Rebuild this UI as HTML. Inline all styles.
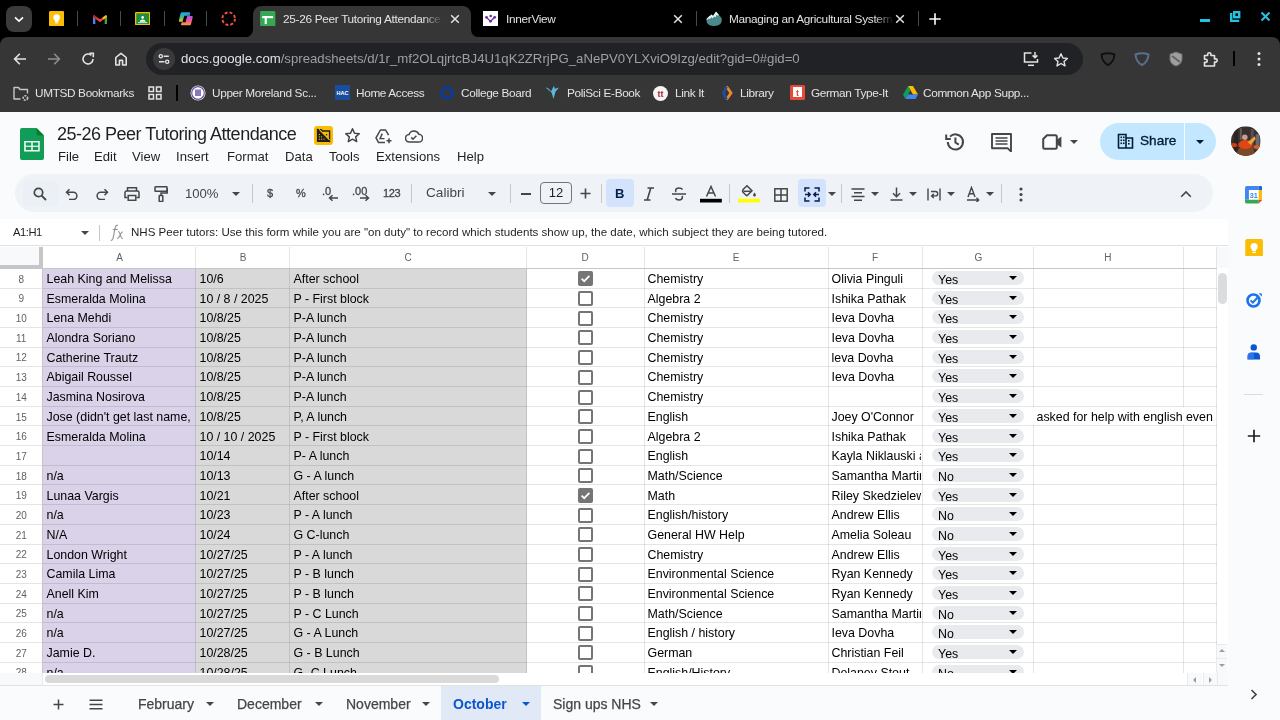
<!DOCTYPE html>
<html><head><meta charset="utf-8">
<style>
*{margin:0;padding:0;box-sizing:border-box}
html,body{width:1280px;height:720px;overflow:hidden;background:#f9fbfd;font-family:"Liberation Sans",sans-serif}
div{will-change:transform}
.a{position:absolute}
svg{display:block}
/* chrome */
#tabstrip{position:absolute;left:0;top:0;width:1280px;height:45px;background:#000}
#toolbar{position:absolute;left:0;top:37.2px;width:1280px;height:75.2px;background:#363636;border-radius:8px 8px 0 0}
.tabt{position:absolute;top:11.5px;font-size:11.8px;letter-spacing:-0.3px;color:#e3e3e3;white-space:nowrap;overflow:hidden}
.bm{position:absolute;top:85.8px;font-size:11.8px;letter-spacing:-0.35px;color:#e3e3e3;white-space:nowrap}
/* sheets header */
#title{position:absolute;left:57px;top:124px;font-size:18px;letter-spacing:-0.5px;color:#1f1f1f;white-space:nowrap}
.menu{position:absolute;top:149px;font-size:13.1px;color:#1f1f1f;white-space:nowrap}
#tb{position:absolute;left:15px;top:174.3px;width:1197.5px;height:37.5px;background:#eff3f8;border-radius:19px}
.tbi{position:absolute;color:#444746}
/* formula bar */
#fbar{position:absolute;left:0;top:219.4px;width:1227.5px;height:26.5px;background:#fff}
/* grid */
#grid{position:absolute;left:0;top:245px;width:1227.5px;height:428.3px;background:#fff;overflow:hidden}
#gridin{position:absolute;left:0;top:-245px;width:1280px;height:720px}
.bg{position:absolute}
.hl{position:absolute;left:0;width:1216.7px;height:1px;background:rgba(0,0,0,0.1)}
.vl{position:absolute;top:246.5px;width:1px;height:427px;background:rgba(0,0,0,0.1)}
.ch{position:absolute;top:246.5px;height:21.8px;line-height:21.8px;text-align:center;font-size:10px;color:#5f6368}
.rh{position:absolute;left:0;width:42.5px;height:19.69px;line-height:19.69px;text-align:center;font-size:10px;color:#5f6368}
.c{position:absolute;height:19.69px;line-height:20px;padding-left:3.5px;font-size:12.4px;color:#000;white-space:nowrap;overflow:hidden}
.cb{position:absolute;width:15px;height:15px;border:2px solid #757575;border-radius:2px}
.cb.on{background:#757575;border:none}
.chip{position:absolute;left:931.6px;width:92.3px;height:14.2px;border-radius:7.1px;background:#e8eaed;font-size:12.4px;line-height:18px;padding-left:6px;color:#000}
.chip i{position:absolute;right:7px;top:5px;width:0;height:0;border-left:4.5px solid transparent;border-right:4.5px solid transparent;border-top:4.5px solid #000}
.stab{position:absolute;top:696px;font-size:14px;color:#444746;white-space:nowrap;-webkit-text-stroke:0.25px #444746}
.dd{position:absolute;width:0;height:0;border-left:4.5px solid transparent;border-right:4.5px solid transparent;border-top:4.5px solid #444746}
</style></head><body>

<!-- ================= CHROME TAB STRIP ================= -->
<div id="tabstrip"></div>
<div id="toolbar"></div>

<!--CHROME-->
<!-- tab search -->
<div class="a" style="left:5.6px;top:5.6px;width:26.3px;height:26.3px;border-radius:8px;background:#3b3b3b"></div>
<svg class="a" style="left:13px;top:13px" width="12" height="12" viewBox="0 0 12 12"><path d="M2 4.3l4 3.8 4-3.8" fill="none" stroke="#fff" stroke-width="1.6"/></svg>
<!-- pinned -->
<svg class="a" style="left:48.7px;top:11px" width="15.3" height="15.3" viewBox="0 0 16 16"><rect width="16" height="16" rx="1.5" fill="#fbbc04"/><circle cx="8" cy="6.8" r="3.4" fill="#fff"/><rect x="6.2" y="9" width="3.6" height="2.5" fill="#fff"/><rect x="6.3" y="12" width="3.4" height="1" fill="#fff"/></svg>
<div class="a" style="left:77.2px;top:11.3px;width:1.3px;height:15px;background:#4a4a4a"></div>
<svg class="a" style="left:92.5px;top:13.5px" width="14" height="10.5" viewBox="0 0 14 10.5"><path d="M1.1 10.5V2.4L7 6.8l5.9-4.4v8.1" fill="none" stroke="#ea4335" stroke-width="2.2" stroke-linejoin="round"/><path d="M1.1 3v7.5" stroke="#4285f4" stroke-width="2.2"/><path d="M12.9 3v7.5" stroke="#34a853" stroke-width="2.2"/><path d="M10.6 4.1l2.3-1.7" stroke="#fbbc04" stroke-width="2.2" stroke-linecap="round"/><path d="M1.1 2.4l1.8 1.4" stroke="#c5221f" stroke-width="2.2" stroke-linecap="round"/></svg>
<div class="a" style="left:120.3px;top:11.3px;width:1.3px;height:15px;background:#4a4a4a"></div>
<svg class="a" style="left:134.7px;top:12px" width="15.3" height="13.3" viewBox="0 0 15.3 13.3"><rect width="15.3" height="13.3" rx="1.2" fill="#f8bd00"/><rect x="1.3" y="1.3" width="12.7" height="10.7" fill="#1e8e3e"/><circle cx="7.65" cy="5.4" r="1.3" fill="#fff"/><path d="M4.6 9.8c0.5-1.6 1.7-2.3 3.05-2.3s2.55 0.7 3.05 2.3z" fill="#fff"/><rect x="3" y="10.3" width="9.3" height="0.8" fill="#fff"/></svg>
<div class="a" style="left:163.5px;top:11.3px;width:1.3px;height:15px;background:#4a4a4a"></div>
<svg class="a" style="left:178px;top:11px" width="16" height="16" viewBox="0 0 16 16"><defs><linearGradient id="cpa" x1="0" y1="0" x2="0" y2="1"><stop offset="0" stop-color="#1c9ef6"/><stop offset="0.5" stop-color="#3fbf78"/><stop offset="1" stop-color="#f2c418"/></linearGradient><linearGradient id="cpb" x1="0" y1="0" x2="0" y2="1"><stop offset="0" stop-color="#b64ff2"/><stop offset="0.55" stop-color="#f45c86"/><stop offset="1" stop-color="#f7a040"/></linearGradient></defs><path d="M3.8 1.3H11c1 0 1.4 0.6 1.1 1.5L10 10.8H2c-1 0-1.3-0.6-1.1-1.4L2.6 2.3C2.8 1.6 3.2 1.3 3.8 1.3z" fill="url(#cpa)"/><path d="M6.2 5H13.6c1 0 1.4 0.6 1.1 1.5L13 13.3c-0.2 0.7-0.7 1-1.3 1H4.2c-1 0-1.3-0.6-1.1-1.4z" fill="url(#cpb)"/><path d="M6.3 4.8h3L7.5 11.2h-3z" fill="#000"/><path d="M9.5 3h2.5l-0.6 2.2H9z" fill="#2060e8" opacity="0.6"/></svg>
<div class="a" style="left:206.3px;top:11.3px;width:1.3px;height:15px;background:#4a4a4a"></div>
<svg class="a" style="left:221px;top:11px" width="15.3" height="15.3" viewBox="0 0 16 16"><circle cx="8" cy="8" r="6.6" fill="none" stroke="#f2503b" stroke-width="2" stroke-dasharray="3.1 2.1"/></svg>

<!-- active tab -->
<svg class="a" style="left:244px;top:5.8px" width="236" height="31.5" viewBox="0 0 236 31.5"><path d="M0 31.5c5 0 9-3 9-8.5V9c0-5 3-9 9-9h200c6 0 9 4 9 9v14c0 5.5 4 8.5 9 8.5z" fill="#363636"/></svg>
<svg class="a" style="left:260px;top:11px" width="15.5" height="15.3" viewBox="0 0 16 16"><rect width="16" height="16" rx="1.5" fill="#34a853"/><rect x="2.2" y="5.3" width="11.4" height="2.2" fill="#fff"/><rect x="4.8" y="5.3" width="2.2" height="8.4" fill="#fff"/></svg>
<div class="tabt" style="left:283px;width:160px;-webkit-mask-image:linear-gradient(90deg,#000 140px,transparent 160px)">25-26 Peer Tutoring Attendance</div>
<svg class="a" style="left:450px;top:13.6px" width="10" height="10" viewBox="0 0 10 10"><path d="M1.2 1.2l7.6 7.6M8.8 1.2l-7.6 7.6" stroke="#e3e3e3" stroke-width="1.5"/></svg>

<!-- tab 2 -->
<svg class="a" style="left:483.3px;top:11px" width="15.2" height="15" viewBox="0 0 15.2 15"><rect width="15.2" height="15" fill="#fff"/><path d="M3.5 6.3L7.5 10.3 11.7 6.3" fill="none" stroke="#6b2fa0" stroke-width="1.2"/><circle cx="3.5" cy="6.3" r="1.4" fill="#6b2fa0"/><circle cx="7.7" cy="5" r="1.3" fill="#6b2fa0"/><circle cx="11.7" cy="6.3" r="1.4" fill="#6b2fa0"/><circle cx="7.5" cy="10.3" r="1.4" fill="#6b2fa0"/></svg>
<div class="tabt" style="left:506px">InnerView</div>
<svg class="a" style="left:673px;top:13.6px" width="10" height="10" viewBox="0 0 10 10"><path d="M1.2 1.2l7.6 7.6M8.8 1.2l-7.6 7.6" stroke="#e3e3e3" stroke-width="1.5"/></svg>
<div class="a" style="left:695.5px;top:11.3px;width:1.3px;height:15px;background:#4a4a4a"></div>

<!-- tab 3 -->
<svg class="a" style="left:706px;top:11px" width="16" height="15" viewBox="0 0 16 15"><path d="M0.7 7.7L3 5.5 5.7 3.5 7 5 10 0.5 15.5 7Q16 9 15.5 11 14 15 8 15 2 15 0.7 11z" fill="#4a8a8a"/><path d="M0.7 7.7L3 5.5 5.7 3.5 7 5 10 0.5 13 4 11.5 4.8 10.5 3.5 9.5 6.5 8 5.5 6.5 7.5 5.5 6 4 8 2.5 7.5 0.7 9.5z" fill="#e8f4f4"/></svg>
<div class="tabt" style="left:729px;width:165px;-webkit-mask-image:linear-gradient(90deg,#000 145px,transparent 165px)">Managing an Agricultural System</div>
<svg class="a" style="left:895px;top:13.6px" width="10" height="10" viewBox="0 0 10 10"><path d="M1.2 1.2l7.6 7.6M8.8 1.2l-7.6 7.6" stroke="#e3e3e3" stroke-width="1.5"/></svg>
<div class="a" style="left:917.5px;top:11.3px;width:1.3px;height:15px;background:#4a4a4a"></div>
<svg class="a" style="left:928px;top:11.5px" width="14" height="14" viewBox="0 0 14 14"><path d="M7 1.3v11.4M1.3 7h11.4" stroke="#fff" stroke-width="1.6"/></svg>

<!-- window controls -->
<div class="a" style="left:1200.2px;top:18.5px;width:9.7px;height:2.5px;background:#22c3e0"></div>
<svg class="a" style="left:1229px;top:10px" width="12" height="12" viewBox="0 0 12 12"><rect x="5.2" y="2.2" width="5" height="5" fill="none" stroke="#22c3e0" stroke-width="2.4"/><path d="M2.2 3v8h8" fill="none" stroke="#22c3e0" stroke-width="2.4"/></svg>
<svg class="a" style="left:1259.5px;top:10.5px" width="11" height="11" viewBox="0 0 11 11"><path d="M1.5 1.5l8 8M9.5 1.5l-8 8" stroke="#22c3e0" stroke-width="2.1"/></svg>

<!-- toolbar row -->
<svg class="a" style="left:12px;top:51px" width="16" height="16" viewBox="0 0 16 16"><path d="M14 8H2.8M7.8 2.8L2.6 8l5.2 5.2" fill="none" stroke="#e3e3e3" stroke-width="1.6"/></svg>
<svg class="a" style="left:46px;top:51px" width="16" height="16" viewBox="0 0 16 16"><path d="M2 8h11.2M8.2 2.8L13.4 8l-5.2 5.2" fill="none" stroke="#8e8e8e" stroke-width="1.6"/></svg>
<svg class="a" style="left:80px;top:51px" width="16" height="16" viewBox="0 0 16 16"><path d="M13 8a5 5 0 1 1-1.6-3.7" fill="none" stroke="#e3e3e3" stroke-width="1.6"/><path d="M9.3 2.2h4v4" fill="none" stroke="#e3e3e3" stroke-width="1.6"/></svg>
<svg class="a" style="left:113px;top:51px" width="16" height="16" viewBox="0 0 16 16"><path d="M2.8 14V6.5L8 2.3l5.2 4.2V14h-3.6V9.4H6.4V14z" fill="none" stroke="#e3e3e3" stroke-width="1.6" stroke-linejoin="round"/></svg>
<div class="a" style="left:146px;top:43px;width:936.7px;height:32px;border-radius:16px;background:#212225"></div>
<div class="a" style="left:152.5px;top:48px;width:22px;height:22px;border-radius:11px;background:#3a3a3c"></div>
<svg class="a" style="left:155.5px;top:51px" width="16" height="16" viewBox="0 0 16 16"><circle cx="4.8" cy="5.2" r="1.6" fill="none" stroke="#e3e3e3" stroke-width="1.3"/><path d="M7.6 5.2h5.2M3 10.8h5.4" stroke="#e3e3e3" stroke-width="1.4"/><circle cx="11.2" cy="10.8" r="1.6" fill="none" stroke="#e3e3e3" stroke-width="1.3"/></svg>
<div class="a" style="left:181px;top:51px;font-size:13.2px;color:#e3e3e3;white-space:nowrap">docs.google.com<span style="color:#9aa0a6">/spreadsheets/d/1r_mf2OLqjrtcBJ4U1qK2ZRrjPG_aNePV0YLXviO9Izg/edit?gid=0#gid=0</span></div>
<svg class="a" style="left:1022px;top:51px" width="18" height="16" viewBox="0 0 18 16"><path d="M9.5 2H2.5v9h13V8" fill="none" stroke="#e3e3e3" stroke-width="1.5"/><path d="M6 14.3h6" stroke="#e3e3e3" stroke-width="1.5"/><path d="M13 1v5.5M10.6 4.4L13 6.8l2.4-2.4" fill="none" stroke="#e3e3e3" stroke-width="1.5"/></svg>
<svg class="a" style="left:1052.5px;top:51.5px" width="16" height="16" viewBox="0 0 16 16"><path d="M8 1.8l1.9 4.2 4.5 0.4-3.4 3 1 4.5L8 11.5l-4 2.4 1-4.5-3.4-3 4.5-0.4z" fill="none" stroke="#e3e3e3" stroke-width="1.4" stroke-linejoin="round"/></svg>
<!-- extensions -->
<svg class="a" style="left:1099.5px;top:51px" width="16" height="16" viewBox="0 0 16 16"><path d="M1.5 3.5Q8 1 14.5 3.5Q14 11 8 14Q2 11 1.5 3.5z" fill="none" stroke="#111" stroke-width="2"/></svg>
<svg class="a" style="left:1133.5px;top:51px" width="16" height="16" viewBox="0 0 16 16"><path d="M1.5 3.5Q8 1 14.5 3.5Q14 11 8 14Q2 11 1.5 3.5z" fill="none" stroke="#5b6f8f" stroke-width="2"/></svg>
<svg class="a" style="left:1167.5px;top:51px" width="16" height="16" viewBox="0 0 16 16"><path d="M8 1L14 3.2V8c0 3.5-2.7 6-6 7-3.3-1-6-3.5-6-7V3.2z" fill="#9e9e9e" stroke="#6f6f6f" stroke-width="1"/><path d="M4 5l8 6" stroke="#5f5f5f" stroke-width="1.6"/></svg>
<svg class="a" style="left:1201.5px;top:50.5px" width="17" height="17" viewBox="0 0 17 17"><path d="M2.5 4.5h3.2v-1.2a1.6 1.6 0 0 1 3.2 0v1.2h3.6v3.4h1.1a1.6 1.6 0 0 1 0 3.2h-1.1v3.9H2.5v-3.6h1.2a1.6 1.6 0 0 0 0-3.2H2.5z" fill="none" stroke="#e3e3e3" stroke-width="1.6" stroke-linejoin="round"/></svg>
<div class="a" style="left:1233px;top:51px;width:1.6px;height:15px;background:#000"></div>
<svg class="a" style="left:1255px;top:51px" width="8" height="16" viewBox="0 0 8 16"><circle cx="4" cy="2.6" r="1.5" fill="#e3e3e3"/><circle cx="4" cy="8" r="1.5" fill="#e3e3e3"/><circle cx="4" cy="13.4" r="1.5" fill="#e3e3e3"/></svg>

<!-- bookmarks -->
<svg class="a" style="left:12px;top:85px" width="18" height="17" viewBox="0 0 18 17"><path d="M8.5 14H2V2.5h4.5L8 4.5h7.5v4" fill="none" stroke="#c4c7c5" stroke-width="1.4" stroke-linejoin="round"/><circle cx="13.4" cy="13" r="2.2" fill="none" stroke="#c4c7c5" stroke-width="1.6" stroke-dasharray="1.8 1"/></svg>
<div class="bm" style="left:35px">UMTSD Bookmarks</div>
<svg class="a" style="left:147.5px;top:86px" width="14" height="14" viewBox="0 0 14 14"><g fill="none" stroke="#e3e3e3" stroke-width="1.5"><rect x="1" y="1" width="4.5" height="4.5"/><rect x="8.5" y="1" width="4.5" height="4.5"/><rect x="1" y="8.5" width="4.5" height="4.5"/><rect x="8.5" y="8.5" width="4.5" height="4.5"/></g></svg>
<div class="a" style="left:175.5px;top:85px;width:1.6px;height:15.5px;background:#000"></div>
<svg class="a" style="left:190px;top:85px" width="16" height="16" viewBox="0 0 16 16"><circle cx="8" cy="8" r="7.5" fill="#fff"/><circle cx="8" cy="8" r="6.3" fill="none" stroke="#6a4fa0" stroke-width="1.2"/><rect x="5" y="4.5" width="6" height="6.5" fill="#8a78b8"/></svg>
<div class="bm" style="left:212px">Upper Moreland Sc...</div>
<svg class="a" style="left:335px;top:85px" width="15" height="15" viewBox="0 0 15 15"><rect width="15" height="15" fill="#1a4d9b"/><text x="7.5" y="10" font-size="5.5" font-weight="bold" fill="#fff" text-anchor="middle" font-family="Liberation Sans">HAC</text></svg>
<div class="bm" style="left:356px">Home Access</div>
<svg class="a" style="left:440px;top:85.5px" width="14" height="14" viewBox="0 0 14 14"><circle cx="7" cy="7" r="5.2" fill="none" stroke="#0a3a9c" stroke-width="3"/></svg>
<div class="bm" style="left:460.5px">College Board</div>
<svg class="a" style="left:545px;top:85px" width="15" height="15" viewBox="0 0 15 15"><path d="M0.5 2.5c2 0 4 1.5 5.5 4L9 0.8l0.8 3 4.2-1.2-3.5 4.2L8.5 14 6.5 7.5z" fill="#5bb8d8"/></svg>
<div class="bm" style="left:566.5px">PoliSci E-Book</div>
<svg class="a" style="left:653px;top:85.5px" width="15" height="15" viewBox="0 0 15 15"><circle cx="7.5" cy="7.5" r="7.5" fill="#f5f5f5"/><text x="7.5" y="11" font-size="9" font-weight="bold" fill="#b0203a" text-anchor="middle" font-family="Liberation Sans">tt</text></svg>
<div class="bm" style="left:674.5px">Link It</div>
<svg class="a" style="left:721px;top:85px" width="12" height="16" viewBox="0 0 12 16"><path d="M5.5 1.5l4.5 6.5-4.5 6.5" fill="none" stroke="#f08a24" stroke-width="2.8"/><path d="M5.5 1.5L2.5 8l3 6.5" fill="none" stroke="#1f4e9a" stroke-width="2.8"/></svg>
<div class="bm" style="left:739.5px">Library</div>
<svg class="a" style="left:790px;top:85px" width="15" height="15" viewBox="0 0 15 15"><rect width="15" height="15" rx="1.5" fill="#e84a3a"/><rect x="3" y="2" width="9" height="10" fill="#fff"/><text x="7.5" y="10.5" font-size="9" font-weight="bold" fill="#e84a3a" text-anchor="middle" font-family="Liberation Sans">t</text></svg>
<div class="bm" style="left:810.5px">German Type-It</div>
<svg class="a" style="left:902.5px;top:86px" width="15" height="13" viewBox="0 0 15 13"><path d="M5 0h5l5 8.6h-5z" fill="#fbbc04"/><path d="M5 0l2.5 4.3L2.5 13 0 8.6z" fill="#0f9d58"/><path d="M2.5 13l2.5-4.4h10L12.5 13z" fill="#4285f4"/></svg>
<div class="bm" style="left:922.5px">Common App Supp...</div>

<!--/CHROME-->

<!-- ================= SHEETS HEADER ================= -->
<div class="a" style="left:1227.5px;top:112.4px;width:52.5px;height:607.6px;background:#f9fbfd"></div>

<svg class="a" style="left:20px;top:128.3px" width="24" height="32" viewBox="0 0 24 32">
 <path d="M2 0h14.5L24 7.5V30a2 2 0 0 1-2 2H2a2 2 0 0 1-2-2V2a2 2 0 0 1 2-2z" fill="#0f9d58"/>
 <path d="M16.5 0L24 7.5h-5.5a2 2 0 0 1-2-2z" fill="#087f23"/>
 <rect x="4.2" y="13" width="15.5" height="10.5" fill="#fff"/>
 <rect x="5.7" y="14.4" width="5.6" height="3.3" fill="#0f9d58"/>
 <rect x="12.7" y="14.4" width="5.6" height="3.3" fill="#0f9d58"/>
 <rect x="5.7" y="18.8" width="5.6" height="3.3" fill="#0f9d58"/>
 <rect x="12.7" y="18.8" width="5.6" height="3.3" fill="#0f9d58"/>
</svg>
<div id="title">25-26 Peer Tutoring Attendance</div>
<div class="menu" style="left:58px">File</div>
<div class="menu" style="left:94px">Edit</div>
<div class="menu" style="left:132px">View</div>
<div class="menu" style="left:176px">Insert</div>
<div class="menu" style="left:227px">Format</div>
<div class="menu" style="left:285px">Data</div>
<div class="menu" style="left:329px">Tools</div>
<div class="menu" style="left:376px">Extensions</div>
<div class="menu" style="left:457px">Help</div>

<!--HEADRIGHT-->
<!-- title icons -->
<svg class="a" style="left:314px;top:126.3px" width="19" height="19" viewBox="0 0 19 19"><rect width="19" height="19" rx="3.2" fill="#fbbc04"/><path d="M3.6 3.6H7.2L8.4 5H15.6V15.2H3.6Z" fill="none" stroke="#1f1f1f" stroke-width="1.4"/><path d="M3.6 3.6L15 15.2H3.6Z" fill="#1f1f1f"/><g fill="#fbbc04"><circle cx="5.4" cy="8.4" r="0.6"/><circle cx="5.4" cy="10.8" r="0.6"/><circle cx="7.6" cy="10.8" r="0.6"/><circle cx="5.4" cy="13.2" r="0.6"/><circle cx="7.6" cy="13.2" r="0.6"/><circle cx="10" cy="13.2" r="0.6"/></g><path d="M4.6 2.6L16.6 14.8" stroke="#fbbc04" stroke-width="0.9"/><path d="M3 3L15.8 16" stroke="#1f1f1f" stroke-width="1.4"/><circle cx="12.6" cy="8.8" r="0.8" fill="#1f1f1f"/></svg>
<svg class="a" style="left:344px;top:127px" width="17" height="17" viewBox="0 0 17 17"><path d="M8.5 1.8l2 4.4 4.8 0.5-3.6 3.2 1 4.7-4.2-2.4-4.2 2.4 1-4.7L1.7 6.7l4.8-0.5z" fill="none" stroke="#444746" stroke-width="1.5" stroke-linejoin="round"/></svg>
<svg class="a" style="left:375px;top:128.5px" width="17" height="15" viewBox="0 0 17 15"><path d="M13.6 6.2L10.6 1H5.4L1 8.8 3.6 13.6H10" fill="none" stroke="#444746" stroke-width="1.5" stroke-linejoin="round"/><path d="M7.3 4.6L5 9.6h4.5" fill="none" stroke="#444746" stroke-width="1.4"/><path d="M11.5 11.7h5M14 9.2v5" stroke="#444746" stroke-width="1.5"/></svg>
<svg class="a" style="left:404.5px;top:129.5px" width="18" height="13" viewBox="0 0 18 13"><path d="M4.5 12a3.7 3.7 0 0 1-0.5-7.4A5.2 5.2 0 0 1 13.8 4.2 3.9 3.9 0 0 1 13.6 12z" fill="none" stroke="#444746" stroke-width="1.5"/><path d="M6.2 7.4l1.8 1.8 3.4-3.4" fill="none" stroke="#444746" stroke-width="1.5"/></svg>

<!-- right side -->
<svg class="a" style="left:943.8px;top:130.6px" width="22" height="22" viewBox="0 0 22 22"><path d="M3.8 11A7.6 7.6 0 1 0 6 5.6" fill="none" stroke="#444746" stroke-width="2"/><path d="M2.2 3.5v4.6h4.6" fill="none" stroke="#444746" stroke-width="2"/><path d="M11.4 6.5v5l3.4 2.2" fill="none" stroke="#444746" stroke-width="2"/></svg>
<svg class="a" style="left:990.5px;top:132.5px" width="21" height="19" viewBox="0 0 21 19"><path d="M1 1h19v17.5l-3.2-3.2H1z" fill="none" stroke="#444746" stroke-width="1.9" stroke-linejoin="round"/><path d="M4.5 5h12M4.5 8h12M4.5 11h12" stroke="#444746" stroke-width="1.5"/></svg>
<svg class="a" style="left:1042px;top:134.3px" width="21" height="16" viewBox="0 0 21 16"><path d="M5 1.2h8.3a1.5 1.5 0 0 1 1.5 1.5v10.6a1.5 1.5 0 0 1-1.5 1.5H2.7a1.5 1.5 0 0 1-1.5-1.5V5z" fill="none" stroke="#444746" stroke-width="2" stroke-linejoin="round"/><path d="M14.8 5.8l4.6-3.4v11.2l-4.6-3.4z" fill="#444746"/></svg>
<div class="dd" style="left:1069.5px;top:139.5px;border-top-color:#444746"></div>
<div class="a" style="left:1100px;top:122.9px;width:116px;height:37.1px;border-radius:18.6px;background:#c2e7ff"></div>
<div class="a" style="left:1184px;top:122.9px;width:1.2px;height:37.1px;background:#f9fbfd"></div>
<svg class="a" style="left:1117px;top:133px" width="17" height="16" viewBox="0 0 17 16"><path d="M1.5 15V1.5h7.5V15M9 5h6.5v10H1" fill="none" stroke="#001d35" stroke-width="1.6"/><g fill="#001d35"><rect x="3.5" y="3.5" width="1.6" height="1.6"/><rect x="6" y="3.5" width="1.6" height="1.6"/><rect x="3.5" y="6.5" width="1.6" height="1.6"/><rect x="6" y="6.5" width="1.6" height="1.6"/><rect x="3.5" y="9.5" width="1.6" height="1.6"/><rect x="6" y="9.5" width="1.6" height="1.6"/><rect x="11" y="7" width="1.6" height="1.6"/><rect x="11" y="10" width="1.6" height="1.6"/></g></svg>
<div class="a" style="left:1140px;top:133px;font-size:13.6px;color:#001d35;-webkit-text-stroke:0.35px #001d35">Share</div>
<div class="dd" style="left:1195.5px;top:139.5px;border-top-color:#001d35"></div>
<svg class="a" style="left:1231.2px;top:126.2px" width="29.6" height="30.2" viewBox="0 0 30 30"><defs><clipPath id="avc"><circle cx="15" cy="15" r="15"/></clipPath></defs><g clip-path="url(#avc)"><rect width="30" height="30" fill="#3a302d"/><rect x="3" y="0" width="4" height="30" fill="#2a2322"/><rect x="20" y="3" width="3" height="20" fill="#5a5050"/><rect x="25" y="8" width="4" height="15" fill="#6a6a70"/><rect x="9" y="2" width="2" height="12" fill="#6b5a55"/><rect x="0" y="19.5" width="30" height="1.2" fill="#b0201a"/><ellipse cx="15" cy="27" rx="9" ry="7" fill="#7a4a28"/><ellipse cx="14.5" cy="18.5" rx="7" ry="4.5" fill="#e04515"/><path d="M17 16l7-6 1 3-5 6z" fill="#f5a030"/><circle cx="14" cy="11" r="2.8" fill="#c8a090"/><ellipse cx="3" cy="19" rx="3" ry="2" fill="#d84010"/><ellipse cx="26" cy="21" rx="3" ry="2" fill="#e06020"/></g></svg>

<!--/HEADRIGHT-->

<div id="tb"></div>
<!--TOOLBAR-->
<div class="a" style="left:23px;top:180.5px;width:35px;height:25px;border-radius:4px;background:#ebf0f7"></div>
<svg class="a" style="left:33px;top:186.5px" width="14" height="14" viewBox="0 0 14 14"><circle cx="5.5" cy="5.5" r="4.2" fill="none" stroke="#444746" stroke-width="1.7"/><path d="M8.6 8.6l4.4 4.4" stroke="#444746" stroke-width="1.9"/></svg>
<svg class="a" style="left:65px;top:188px" width="14" height="12" viewBox="0 0 14 12"><path d="M4.5 1.2L1.5 4.2l3 3" fill="none" stroke="#444746" stroke-width="1.5"/><path d="M1.8 4.2h6.5a3.6 3.6 0 0 1 0 7.2H4" fill="none" stroke="#444746" stroke-width="1.5"/></svg>
<svg class="a" style="left:95px;top:188px" width="14" height="12" viewBox="0 0 14 12"><path d="M9.5 1.2l3 3-3 3" fill="none" stroke="#444746" stroke-width="1.5"/><path d="M12.2 4.2H5.7a3.6 3.6 0 0 0 0 7.2H10" fill="none" stroke="#444746" stroke-width="1.5"/></svg>
<svg class="a" style="left:124px;top:187px" width="16" height="14" viewBox="0 0 16 14"><path d="M3.5 4V0.8h9V4" fill="none" stroke="#444746" stroke-width="1.5"/><path d="M3.5 10.5H1V5.5a1.5 1.5 0 0 1 1.5-1.5h11A1.5 1.5 0 0 1 15 5.5v5h-2.5" fill="none" stroke="#444746" stroke-width="1.5"/><rect x="4.2" y="8.5" width="7.6" height="4.8" fill="none" stroke="#444746" stroke-width="1.5"/></svg>
<svg class="a" style="left:154px;top:186px" width="14" height="16" viewBox="0 0 14 16"><rect x="1" y="0.8" width="12" height="4.5" rx="0.5" fill="none" stroke="#444746" stroke-width="1.5"/><path d="M13 3h0.2v4H7v2.5" fill="none" stroke="#444746" stroke-width="1.5"/><rect x="5.2" y="9.5" width="3.6" height="6" rx="0.6" fill="none" stroke="#444746" stroke-width="1.5"/></svg>
<div class="a" style="left:185px;top:185.5px;font-size:13.1px;color:#444746">100%</div>
<div class="dd" style="left:231.5px;top:192px"></div>
<div class="a" style="left:252px;top:183.7px;width:1px;height:19px;background:#c7c7c7"></div>
<div class="a" style="left:267px;top:186.5px;font-size:11px;-webkit-text-stroke:0.3px #444746;color:#444746">$</div>
<div class="a" style="left:295.5px;top:186.5px;font-size:11px;-webkit-text-stroke:0.3px #444746;color:#444746">%</div>
<div class="a" style="left:322px;top:185px;font-size:11px;-webkit-text-stroke:0.3px #444746;color:#444746">.0</div>
<svg class="a" style="left:328px;top:194px" width="11" height="8" viewBox="0 0 11 8"><path d="M10 4H2M4.5 1.2L1.5 4l3 2.8" fill="none" stroke="#444746" stroke-width="1.5"/></svg>
<div class="a" style="left:352px;top:185px;font-size:11px;-webkit-text-stroke:0.3px #444746;color:#444746">.00</div>
<svg class="a" style="left:359px;top:194px" width="11" height="8" viewBox="0 0 11 8"><path d="M1 4h8M6.5 1.2L9.5 4l-3 2.8" fill="none" stroke="#444746" stroke-width="1.5"/></svg>
<div class="a" style="left:383px;top:186.5px;font-size:11px;-webkit-text-stroke:0.3px #444746;color:#444746;letter-spacing:-0.4px">123</div>
<div class="a" style="left:410.5px;top:183.7px;width:1px;height:19px;background:#c7c7c7"></div>
<div class="a" style="left:425.5px;top:185.3px;font-size:13.6px;color:#444746">Calibri</div>
<div class="dd" style="left:488px;top:192px"></div>
<div class="a" style="left:510px;top:183.7px;width:1px;height:19px;background:#c7c7c7"></div>
<div class="a" style="left:520.5px;top:192.5px;width:9.5px;height:1.6px;background:#444746"></div>
<div class="a" style="left:540px;top:182px;width:31.8px;height:22.3px;border:1.2px solid #747775;border-radius:4px;font-size:13px;color:#1f1f1f;text-align:center;line-height:20px">12</div>
<svg class="a" style="left:580px;top:188px" width="11" height="11" viewBox="0 0 11 11"><path d="M5.5 0.5v10M0.5 5.5h10" stroke="#444746" stroke-width="1.6"/></svg>
<div class="a" style="left:601px;top:183.7px;width:1px;height:19px;background:#c7c7c7"></div>
<div class="a" style="left:605.5px;top:179.3px;width:27.8px;height:27.5px;border-radius:4px;background:#d3e3fd"></div>
<div class="a" style="left:614.5px;top:185.5px;font-size:13px;font-weight:bold;color:#041e49">B</div>
<svg class="a" style="left:643px;top:187px" width="12" height="14" viewBox="0 0 12 14"><path d="M4.5 1h6.5M1 13h6.5M7.8 1L4.2 13" fill="none" stroke="#444746" stroke-width="1.6"/></svg>
<svg class="a" style="left:671px;top:186px" width="16" height="16" viewBox="0 0 16 16"><path d="M1 8h14" stroke="#444746" stroke-width="1.5"/><path d="M11.5 3.5C10.8 2.5 9.5 2 8 2 6 2 4.6 3 4.6 4.6c0 0.6 0.2 1.1 0.5 1.4M11 10c0.3 0.4 0.4 0.8 0.4 1.3 0 1.7-1.5 2.7-3.4 2.7-1.7 0-3-0.7-3.6-1.8" fill="none" stroke="#444746" stroke-width="1.5"/></svg>
<svg class="a" style="left:700px;top:185px" width="22" height="18" viewBox="0 0 22 18"><path d="M6.5 11.5L11 1.5l4.5 10M8.3 8h5.4" fill="none" stroke="#444746" stroke-width="1.5"/><rect x="0" y="13.8" width="21.8" height="3.7" fill="#000"/></svg>
<div class="a" style="left:729px;top:183.7px;width:1px;height:19px;background:#c7c7c7"></div>
<svg class="a" style="left:738px;top:185px" width="22" height="18" viewBox="0 0 22 18"><path d="M5 4.5L9 0.8l5 5-4.5 4.5a1 1 0 0 1-1.4 0L5 7.2a1.4 1.4 0 0 1 0-2z" fill="none" stroke="#444746" stroke-width="1.5"/><path d="M5.5 6.3h8" stroke="#444746" stroke-width="1.5"/><path d="M16.5 7.5c0.8 1.2 1.4 2 1.4 2.7a1.4 1.4 0 0 1-2.8 0c0-0.7 0.6-1.5 1.4-2.7z" fill="#444746"/><rect x="0" y="13.8" width="21.8" height="3.7" fill="#ffff00"/></svg>
<svg class="a" style="left:773.5px;top:187.5px" width="14" height="14" viewBox="0 0 14 14"><g fill="none" stroke="#444746" stroke-width="1.5"><rect x="0.8" y="0.8" width="12.4" height="12.4"/><path d="M7 0.8v12.4M0.8 7h12.4"/></g></svg>
<div class="a" style="left:797.5px;top:179.3px;width:28px;height:27.5px;border-radius:4px;background:#d3e3fd"></div>
<svg class="a" style="left:803.5px;top:186.5px" width="16" height="15" viewBox="0 0 16 15"><g fill="none" stroke="#041e49" stroke-width="1.5"><path d="M1 4.5V1h4.5M10.5 1H15v3.5M1 10.5V14h4.5M10.5 14H15v-3.5"/><path d="M1 7.5h5M4 5.2L6.2 7.5 4 9.8M15 7.5h-5M12 5.2L9.8 7.5 12 9.8"/></g></svg>
<div class="dd" style="left:827.5px;top:192px"></div>
<div class="a" style="left:840.5px;top:183.7px;width:1px;height:19px;background:#c7c7c7"></div>
<svg class="a" style="left:850.5px;top:187.5px" width="14" height="14" viewBox="0 0 14 14"><path d="M0.5 1h13M3 4.7h8M0.5 8.4h13M3 12.2h8" stroke="#444746" stroke-width="1.5"/></svg>
<div class="dd" style="left:870.5px;top:192px"></div>
<svg class="a" style="left:889.5px;top:187px" width="13" height="14" viewBox="0 0 13 14"><path d="M0.5 13h12M6.5 0.5v9M3 6.2l3.5 3.5 3.5-3.5" fill="none" stroke="#444746" stroke-width="1.5"/></svg>
<div class="dd" style="left:908.5px;top:192px"></div>
<svg class="a" style="left:927px;top:188px" width="14" height="13" viewBox="0 0 14 13"><path d="M1 0.5v12M13 0.5v12M4 3.5h4.5a2.2 2.2 0 0 1 0 4.4H5M6.8 5.8L4.6 7.9l2.2 2.1" fill="none" stroke="#444746" stroke-width="1.4"/></svg>
<div class="dd" style="left:947px;top:192px"></div>
<svg class="a" style="left:966px;top:186px" width="15" height="16" viewBox="0 0 15 16"><path d="M2 11L5.5 1.5 9 11M3.2 7.8h4.6M1 14h11.5M10.5 11.8l2.2 2.2-2.2 2.2" fill="none" stroke="#444746" stroke-width="1.4"/></svg>
<div class="dd" style="left:985.5px;top:192px"></div>
<div class="a" style="left:1001px;top:183.7px;width:1px;height:19px;background:#c7c7c7"></div>
<svg class="a" style="left:1017.5px;top:187px" width="6" height="16" viewBox="0 0 6 16"><circle cx="3" cy="2" r="1.6" fill="#444746"/><circle cx="3" cy="7.5" r="1.6" fill="#444746"/><circle cx="3" cy="13" r="1.6" fill="#444746"/></svg>
<svg class="a" style="left:1180px;top:190px" width="12" height="8" viewBox="0 0 12 8"><path d="M1.2 6.8L6 2l4.8 4.8" fill="none" stroke="#444746" stroke-width="1.6"/></svg>

<!--/TOOLBAR-->

<div id="fbar"></div>
<!--FBAR-->
<div class="a" style="left:13px;top:225.5px;font-size:11.2px;color:#1f1f1f;letter-spacing:-0.45px">A1:H1</div>
<div class="dd" style="left:80.5px;top:230.6px"></div>
<div class="a" style="left:99.3px;top:225px;width:1px;height:15.6px;background:#c7c7c7"></div>
<svg class="a" style="left:110px;top:224px" width="15" height="17" viewBox="0 0 15 17"><path d="M7.8 1.2C6.2 1 5.5 2 5.2 3.5L3 14.5c-0.3 1.4-1 2-2.3 1.8" fill="none" stroke="#8f9396" stroke-width="1.15"/><path d="M2.8 5.5h5" stroke="#8f9396" stroke-width="1.15"/><path d="M8 7.5c1 0 1.4 0.6 1.8 1.8l1.2 3.6c0.4 1.2 0.9 1.7 1.8 1.7M13 7.8c-1 0-1.8 1.2-2.6 2.6l-1.2 2.4c-0.6 1.2-1.2 1.8-2 1.8" fill="none" stroke="#8f9396" stroke-width="1.1"/></svg>
<div class="a" style="left:131px;top:225.5px;font-size:11.56px;color:#1f1f1f;white-space:nowrap">NHS Peer tutors: Use this form while you are "on duty" to record which students show up, the date, which subject they are being tutored.</div>

<!--/FBAR-->

<div id="grid"><div id="gridin">
<div class="bg" style="left:42.5px;top:268.4px;width:153px;height:404.9px;background:#d9d2e9"></div>
<div class="bg" style="left:195.5px;top:268.4px;width:330.5px;height:404.9px;background:#d9d9d9"></div>
<div class="hl" style="top:287.59px"></div>
<div class="hl" style="top:307.27px"></div>
<div class="hl" style="top:326.96px"></div>
<div class="hl" style="top:346.65px"></div>
<div class="hl" style="top:366.34px"></div>
<div class="hl" style="top:386.02px"></div>
<div class="hl" style="top:405.71px"></div>
<div class="hl" style="top:425.4px"></div>
<div class="hl" style="top:445.09px"></div>
<div class="hl" style="top:464.77px"></div>
<div class="hl" style="top:484.46px"></div>
<div class="hl" style="top:504.15px"></div>
<div class="hl" style="top:523.84px"></div>
<div class="hl" style="top:543.52px"></div>
<div class="hl" style="top:563.21px"></div>
<div class="hl" style="top:582.9px"></div>
<div class="hl" style="top:602.59px"></div>
<div class="hl" style="top:622.27px"></div>
<div class="hl" style="top:641.96px"></div>
<div class="hl" style="top:661.65px"></div>
<div class="vl" style="left:195px"></div>
<div class="vl" style="left:289.3px"></div>
<div class="vl" style="left:525.5px"></div>
<div class="vl" style="left:643.7px"></div>
<div class="vl" style="left:827.9px"></div>
<div class="vl" style="left:922.1px"></div>
<div class="vl" style="left:1032.7px"></div>
<div class="vl" style="left:1182.5px"></div>
<div class="vl" style="left:1216.2px"></div>
<div class="ch" style="left:42.5px;width:153px">A</div>
<div class="ch" style="left:195.5px;width:94.3px">B</div>
<div class="ch" style="left:289.8px;width:236.2px">C</div>
<div class="ch" style="left:526px;width:118.2px">D</div>
<div class="ch" style="left:644.2px;width:184.2px">E</div>
<div class="ch" style="left:828.4px;width:94.2px">F</div>
<div class="ch" style="left:922.6px;width:110.6px">G</div>
<div class="ch" style="left:1033.2px;width:149.8px">H</div>
<div class="bg" style="left:0;top:246.5px;width:42.8px;height:22.2px;background:#f8f9fa;border-right:4.5px solid #c4c7c5;border-bottom:4.1px solid #c4c7c5"></div>
<div class="hl" style="top:245.3px;height:1.2px;width:1227.5px;background:#e1e1e1"></div>
<div class="hl" style="top:268px;left:42.5px;background:#c4c7c5"></div>
<div class="vl" style="left:42.3px;top:268px;background:#c4c7c5"></div>
<div class="bg" style="left:1216.7px;top:246.5px;width:11px;height:22px;background:#f8f9fa"></div>
<div class="bg" style="left:1216.7px;top:268.4px;width:11px;height:405px;background:#fff"></div>
<div class="bg" style="left:1218px;top:272.5px;width:9px;height:30.5px;border-radius:4.5px;background:#dadce0"></div>
<div class="rh" style="top:269.7px">8</div>
<div class="c" style="left:42.5px;top:269px;width:152px">Leah King and Melissa</div>
<div class="c" style="left:195.5px;top:269px;width:93.3px">10/6</div>
<div class="c" style="left:289.8px;top:269px;width:235.2px">After school</div>
<div class="c" style="left:644.2px;top:269px;width:183.2px">Chemistry</div>
<div class="c" style="left:828.4px;top:269px;width:93.2px">Olivia Pinguli</div>
<div class="cb on" style="left:578px;top:271.4px"><svg width="15" height="15" viewBox="0 0 15 15"><path d="M3.6 7.6l2.6 2.6 5.2-5.4" fill="none" stroke="#fff" stroke-width="1.7"/></svg></div>
<div class="chip" style="top:271px">Yes<i></i></div>
<div class="rh" style="top:289.39px">9</div>
<div class="c" style="left:42.5px;top:288.69px;width:152px">Esmeralda Molina</div>
<div class="c" style="left:195.5px;top:288.69px;width:93.3px">10 / 8 / 2025</div>
<div class="c" style="left:289.8px;top:288.69px;width:235.2px">P - First block</div>
<div class="c" style="left:644.2px;top:288.69px;width:183.2px">Algebra 2</div>
<div class="c" style="left:828.4px;top:288.69px;width:93.2px">Ishika Pathak</div>
<div class="cb" style="left:578px;top:291.09px"></div>
<div class="chip" style="top:290.69px">Yes<i></i></div>
<div class="rh" style="top:309.07px">10</div>
<div class="c" style="left:42.5px;top:308.38px;width:152px">Lena Mehdi</div>
<div class="c" style="left:195.5px;top:308.38px;width:93.3px">10/8/25</div>
<div class="c" style="left:289.8px;top:308.38px;width:235.2px">P-A lunch</div>
<div class="c" style="left:644.2px;top:308.38px;width:183.2px">Chemistry</div>
<div class="c" style="left:828.4px;top:308.38px;width:93.2px">Ieva Dovha</div>
<div class="cb" style="left:578px;top:310.77px"></div>
<div class="chip" style="top:310.38px">Yes<i></i></div>
<div class="rh" style="top:328.76px">11</div>
<div class="c" style="left:42.5px;top:328.06px;width:152px">Alondra Soriano</div>
<div class="c" style="left:195.5px;top:328.06px;width:93.3px">10/8/25</div>
<div class="c" style="left:289.8px;top:328.06px;width:235.2px">P-A lunch</div>
<div class="c" style="left:644.2px;top:328.06px;width:183.2px">Chemistry</div>
<div class="c" style="left:828.4px;top:328.06px;width:93.2px">Ieva Dovha</div>
<div class="cb" style="left:578px;top:330.46px"></div>
<div class="chip" style="top:330.06px">Yes<i></i></div>
<div class="rh" style="top:348.45px">12</div>
<div class="c" style="left:42.5px;top:347.75px;width:152px">Catherine Trautz</div>
<div class="c" style="left:195.5px;top:347.75px;width:93.3px">10/8/25</div>
<div class="c" style="left:289.8px;top:347.75px;width:235.2px">P-A lunch</div>
<div class="c" style="left:644.2px;top:347.75px;width:183.2px">Chemistry</div>
<div class="c" style="left:828.4px;top:347.75px;width:93.2px">leva Dovha</div>
<div class="cb" style="left:578px;top:350.15px"></div>
<div class="chip" style="top:349.75px">Yes<i></i></div>
<div class="rh" style="top:368.14px">13</div>
<div class="c" style="left:42.5px;top:367.44px;width:152px">Abigail Roussel</div>
<div class="c" style="left:195.5px;top:367.44px;width:93.3px">10/8/25</div>
<div class="c" style="left:289.8px;top:367.44px;width:235.2px">P-A lunch</div>
<div class="c" style="left:644.2px;top:367.44px;width:183.2px">Chemistry</div>
<div class="c" style="left:828.4px;top:367.44px;width:93.2px">Ieva Dovha</div>
<div class="cb" style="left:578px;top:369.84px"></div>
<div class="chip" style="top:369.44px">Yes<i></i></div>
<div class="rh" style="top:387.82px">14</div>
<div class="c" style="left:42.5px;top:387.12px;width:152px">Jasmina Nosirova</div>
<div class="c" style="left:195.5px;top:387.12px;width:93.3px">10/8/25</div>
<div class="c" style="left:289.8px;top:387.12px;width:235.2px">P-A lunch</div>
<div class="c" style="left:644.2px;top:387.12px;width:183.2px">Chemistry</div>
<div class="cb" style="left:578px;top:389.52px"></div>
<div class="chip" style="top:389.12px">Yes<i></i></div>
<div class="rh" style="top:407.51px">15</div>
<div class="c" style="left:42.5px;top:406.81px;width:152px">Jose (didn't get last name, </div>
<div class="c" style="left:195.5px;top:406.81px;width:93.3px">10/8/25</div>
<div class="c" style="left:289.8px;top:406.81px;width:235.2px">P, A lunch</div>
<div class="c" style="left:644.2px;top:406.81px;width:183.2px">English</div>
<div class="c" style="left:828.4px;top:406.81px;width:93.2px">Joey O'Connor</div>
<div class="c" style="left:1033.2px;top:406.71px;width:182.5px;background:#fff;height:17.8px;line-height:20.4px">asked for help with english even</div>
<div class="cb" style="left:578px;top:409.21px"></div>
<div class="chip" style="top:408.81px">Yes<i></i></div>
<div class="rh" style="top:427.2px">16</div>
<div class="c" style="left:42.5px;top:426.5px;width:152px">Esmeralda Molina</div>
<div class="c" style="left:195.5px;top:426.5px;width:93.3px">10 / 10 / 2025</div>
<div class="c" style="left:289.8px;top:426.5px;width:235.2px">P - First block</div>
<div class="c" style="left:644.2px;top:426.5px;width:183.2px">Algebra 2</div>
<div class="c" style="left:828.4px;top:426.5px;width:93.2px">Ishika Pathak</div>
<div class="cb" style="left:578px;top:428.9px"></div>
<div class="chip" style="top:428.5px">Yes<i></i></div>
<div class="rh" style="top:446.89px">17</div>
<div class="c" style="left:195.5px;top:446.19px;width:93.3px">10/14</div>
<div class="c" style="left:289.8px;top:446.19px;width:235.2px">P- A lunch</div>
<div class="c" style="left:644.2px;top:446.19px;width:183.2px">English</div>
<div class="c" style="left:828.4px;top:446.19px;width:93.2px">Kayla Niklauski and</div>
<div class="cb" style="left:578px;top:448.59px"></div>
<div class="chip" style="top:448.19px">Yes<i></i></div>
<div class="rh" style="top:466.57px">18</div>
<div class="c" style="left:42.5px;top:465.88px;width:152px">n/a</div>
<div class="c" style="left:195.5px;top:465.88px;width:93.3px">10/13</div>
<div class="c" style="left:289.8px;top:465.88px;width:235.2px">G - A lunch</div>
<div class="c" style="left:644.2px;top:465.88px;width:183.2px">Math/Science</div>
<div class="c" style="left:828.4px;top:465.88px;width:93.2px">Samantha Martin</div>
<div class="cb" style="left:578px;top:468.27px"></div>
<div class="chip" style="top:467.88px">No<i></i></div>
<div class="rh" style="top:486.26px">19</div>
<div class="c" style="left:42.5px;top:485.56px;width:152px">Lunaa Vargis</div>
<div class="c" style="left:195.5px;top:485.56px;width:93.3px">10/21</div>
<div class="c" style="left:289.8px;top:485.56px;width:235.2px">After school</div>
<div class="c" style="left:644.2px;top:485.56px;width:183.2px">Math</div>
<div class="c" style="left:828.4px;top:485.56px;width:93.2px">Riley Skedzielewski</div>
<div class="cb on" style="left:578px;top:487.96px"><svg width="15" height="15" viewBox="0 0 15 15"><path d="M3.6 7.6l2.6 2.6 5.2-5.4" fill="none" stroke="#fff" stroke-width="1.7"/></svg></div>
<div class="chip" style="top:487.56px">Yes<i></i></div>
<div class="rh" style="top:505.95px">20</div>
<div class="c" style="left:42.5px;top:505.25px;width:152px">n/a</div>
<div class="c" style="left:195.5px;top:505.25px;width:93.3px">10/23</div>
<div class="c" style="left:289.8px;top:505.25px;width:235.2px">P - A lunch</div>
<div class="c" style="left:644.2px;top:505.25px;width:183.2px">English/history</div>
<div class="c" style="left:828.4px;top:505.25px;width:93.2px">Andrew Ellis</div>
<div class="cb" style="left:578px;top:507.65px"></div>
<div class="chip" style="top:507.25px">No<i></i></div>
<div class="rh" style="top:525.64px">21</div>
<div class="c" style="left:42.5px;top:524.94px;width:152px">N/A</div>
<div class="c" style="left:195.5px;top:524.94px;width:93.3px">10/24</div>
<div class="c" style="left:289.8px;top:524.94px;width:235.2px">G C-lunch</div>
<div class="c" style="left:644.2px;top:524.94px;width:183.2px">General HW Help</div>
<div class="c" style="left:828.4px;top:524.94px;width:93.2px">Amelia Soleau</div>
<div class="cb" style="left:578px;top:527.34px"></div>
<div class="chip" style="top:526.94px">No<i></i></div>
<div class="rh" style="top:545.32px">22</div>
<div class="c" style="left:42.5px;top:544.62px;width:152px">London Wright</div>
<div class="c" style="left:195.5px;top:544.62px;width:93.3px">10/27/25</div>
<div class="c" style="left:289.8px;top:544.62px;width:235.2px">P - A lunch</div>
<div class="c" style="left:644.2px;top:544.62px;width:183.2px">Chemistry</div>
<div class="c" style="left:828.4px;top:544.62px;width:93.2px">Andrew Ellis</div>
<div class="cb" style="left:578px;top:547.02px"></div>
<div class="chip" style="top:546.62px">Yes<i></i></div>
<div class="rh" style="top:565.01px">23</div>
<div class="c" style="left:42.5px;top:564.31px;width:152px">Camila Lima</div>
<div class="c" style="left:195.5px;top:564.31px;width:93.3px">10/27/25</div>
<div class="c" style="left:289.8px;top:564.31px;width:235.2px">P - B lunch</div>
<div class="c" style="left:644.2px;top:564.31px;width:183.2px">Environmental Science</div>
<div class="c" style="left:828.4px;top:564.31px;width:93.2px">Ryan Kennedy</div>
<div class="cb" style="left:578px;top:566.71px"></div>
<div class="chip" style="top:566.31px">Yes<i></i></div>
<div class="rh" style="top:584.7px">24</div>
<div class="c" style="left:42.5px;top:584px;width:152px">Anell Kim</div>
<div class="c" style="left:195.5px;top:584px;width:93.3px">10/27/25</div>
<div class="c" style="left:289.8px;top:584px;width:235.2px">P - B lunch</div>
<div class="c" style="left:644.2px;top:584px;width:183.2px">Environmental Science</div>
<div class="c" style="left:828.4px;top:584px;width:93.2px">Ryan Kennedy</div>
<div class="cb" style="left:578px;top:586.4px"></div>
<div class="chip" style="top:586px">Yes<i></i></div>
<div class="rh" style="top:604.39px">25</div>
<div class="c" style="left:42.5px;top:603.69px;width:152px">n/a</div>
<div class="c" style="left:195.5px;top:603.69px;width:93.3px">10/27/25</div>
<div class="c" style="left:289.8px;top:603.69px;width:235.2px">P - C Lunch</div>
<div class="c" style="left:644.2px;top:603.69px;width:183.2px">Math/Science</div>
<div class="c" style="left:828.4px;top:603.69px;width:93.2px">Samantha Martin</div>
<div class="cb" style="left:578px;top:606.09px"></div>
<div class="chip" style="top:605.69px">No<i></i></div>
<div class="rh" style="top:624.07px">26</div>
<div class="c" style="left:42.5px;top:623.38px;width:152px">n/a</div>
<div class="c" style="left:195.5px;top:623.38px;width:93.3px">10/27/25</div>
<div class="c" style="left:289.8px;top:623.38px;width:235.2px">G - A Lunch</div>
<div class="c" style="left:644.2px;top:623.38px;width:183.2px">English / history</div>
<div class="c" style="left:828.4px;top:623.38px;width:93.2px">Ieva Dovha</div>
<div class="cb" style="left:578px;top:625.77px"></div>
<div class="chip" style="top:625.38px">No<i></i></div>
<div class="rh" style="top:643.76px">27</div>
<div class="c" style="left:42.5px;top:643.06px;width:152px">Jamie D.</div>
<div class="c" style="left:195.5px;top:643.06px;width:93.3px">10/28/25</div>
<div class="c" style="left:289.8px;top:643.06px;width:235.2px">G - B Lunch</div>
<div class="c" style="left:644.2px;top:643.06px;width:183.2px">German</div>
<div class="c" style="left:828.4px;top:643.06px;width:93.2px">Christian Feil</div>
<div class="cb" style="left:578px;top:645.46px"></div>
<div class="chip" style="top:645.06px">Yes<i></i></div>
<div class="rh" style="top:663.45px">28</div>
<div class="c" style="left:42.5px;top:662.75px;width:152px">n/a</div>
<div class="c" style="left:195.5px;top:662.75px;width:93.3px">10/28/25</div>
<div class="c" style="left:289.8px;top:662.75px;width:235.2px">G- C Lunch</div>
<div class="c" style="left:644.2px;top:662.75px;width:183.2px">English/History</div>
<div class="c" style="left:828.4px;top:662.75px;width:93.2px">Delaney Stout</div>
<div class="cb" style="left:578px;top:665.15px"></div>
<div class="chip" style="top:664.75px">No<i></i></div>
</div></div>

<!--BOTTOM-->
<!-- h scrollbar -->
<div class="a" style="left:0;top:673.3px;width:42.5px;height:11.7px;background:#f8f9fa;border-right:1px solid #e8eaed"></div>
<div class="a" style="left:42.5px;top:673.3px;width:1185px;height:11.7px;background:#fff"></div>
<div class="a" style="left:45.3px;top:675.2px;width:453.7px;height:8px;border-radius:4px;background:#dadada"></div>
<div class="a" style="left:1187.2px;top:673.3px;width:15.3px;height:12px;background:#f8f9fa;border-left:1px solid #e8eaed"></div>
<div class="a" style="left:1202.5px;top:673.3px;width:14.5px;height:12px;background:#f8f9fa;border-left:1px solid #e8eaed"></div>
<div class="a" style="left:1217px;top:673.3px;width:10.5px;height:12px;background:#f8f9fa;border-left:1px solid #e8eaed"></div>
<div class="a" style="left:1193px;top:676.8px;width:0;height:0;border-top:3px solid transparent;border-bottom:3px solid transparent;border-right:3.5px solid #9aa0a6"></div>
<div class="a" style="left:1208.5px;top:676.8px;width:0;height:0;border-top:3px solid transparent;border-bottom:3px solid transparent;border-left:3.5px solid #9aa0a6"></div>
<div class="a" style="left:1216.4px;top:643.6px;width:11.1px;height:14.6px;background:#f8f9fa;border-top:1px solid #e8eaed;border-left:1px solid #e8eaed"></div>
<div class="a" style="left:1216.4px;top:658.2px;width:11.1px;height:15px;background:#f8f9fa;border-top:1px solid #e8eaed;border-left:1px solid #e8eaed"></div>
<div class="a" style="left:1219px;top:648.7px;width:0;height:0;border-left:3px solid transparent;border-right:3px solid transparent;border-bottom:3.5px solid #9aa0a6"></div>
<div class="a" style="left:1219px;top:664.2px;width:0;height:0;border-left:3px solid transparent;border-right:3px solid transparent;border-top:3.5px solid #9aa0a6"></div>
<div class="a" style="left:0;top:684.8px;width:1227.5px;height:1px;background:#e1e3e1"></div>

<!-- bottom sheet tabs -->
<svg class="a" style="left:52.5px;top:698.5px" width="11" height="11" viewBox="0 0 11 11"><path d="M5.5 0.5v10M0.5 5.5h10" stroke="#444746" stroke-width="1.5"/></svg>
<svg class="a" style="left:88.5px;top:698.5px" width="14" height="11" viewBox="0 0 14 11"><path d="M0.5 1.2h13M0.5 5.5h13M0.5 9.8h13" stroke="#444746" stroke-width="1.5"/></svg>
<div class="stab" style="left:137.5px">February</div><div class="dd" style="left:205.5px;top:701.5px"></div>
<div class="stab" style="left:237px">December</div><div class="dd" style="left:314.5px;top:701.5px"></div>
<div class="stab" style="left:345.5px">November</div><div class="dd" style="left:422px;top:701.5px"></div>
<div class="a" style="left:441.3px;top:685.8px;width:99.7px;height:34.2px;background:#e1e9f7"></div>
<div class="stab" style="left:453px;color:#0b57d0;font-weight:bold;-webkit-text-stroke:0">October</div><div class="dd" style="left:521.5px;top:701.5px;border-top-color:#0b57d0"></div>
<div class="stab" style="left:552.5px">Sign ups NHS</div><div class="dd" style="left:650px;top:701.5px"></div>

<!--/BOTTOM-->
<!--SIDE-->
<svg class="a" style="left:1244.6px;top:186px" width="17.6" height="17.6" viewBox="0 0 18 18"><path d="M2 0h12l4 4v12a2 2 0 0 1-2 2H2a2 2 0 0 1-2-2V2a2 2 0 0 1 2-2z" fill="#fff"/><path d="M0 2a2 2 0 0 1 2-2h12v4H4v10H0z" fill="#4285f4"/><path d="M0 14h14v4H2a2 2 0 0 1-2-2z" fill="#34a853"/><path d="M14 4h4v10h-4z" fill="#fbbc04"/><path d="M14 14h4l-4 4z" fill="#ea4335"/><path d="M14 0h2a2 2 0 0 1 2 2v2h-4z" fill="#1967d2"/><text x="9" y="12" font-size="7.5" font-family="Liberation Sans" fill="#4285f4" text-anchor="middle" font-weight="bold">31</text></svg>
<svg class="a" style="left:1244.6px;top:238.6px" width="18.2" height="17.7" viewBox="0 0 18 18"><rect width="18" height="18" rx="2" fill="#fbbc04"/><circle cx="9" cy="7.6" r="3.6" fill="#fff"/><rect x="7" y="10" width="4" height="2.5" fill="#fff"/><rect x="7.2" y="13.2" width="3.6" height="1.1" fill="#fff"/></svg>
<svg class="a" style="left:1245.5px;top:292.3px" width="17" height="16" viewBox="0 0 17 16"><circle cx="7.5" cy="8.5" r="6" fill="none" stroke="#1a73e8" stroke-width="2.6"/><path d="M4.6 8.4l2.2 2.2 4.6-4.8" fill="none" stroke="#1a73e8" stroke-width="2"/><path d="M12.5 1.2l3.3 0.2 0.2 3.3z" fill="#1a73e8"/></svg>
<svg class="a" style="left:1247px;top:344.3px" width="13.5" height="16" viewBox="0 0 13.5 16"><circle cx="6.75" cy="3.4" r="3.2" fill="#0b57d0"/><path d="M0.5 15.5v-3a4 4 0 0 1 4-4h4.5a4 4 0 0 1 4 4v3z" fill="#0b57d0"/><path d="M0.5 15.5v-3a4 4 0 0 1 4-4h2.5v7z" fill="#4285f4" opacity="0.6"/></svg>
<div class="a" style="left:1244px;top:393.8px;width:19.3px;height:1px;background:#dadce0"></div>
<svg class="a" style="left:1246.5px;top:429px" width="14" height="14" viewBox="0 0 14 14"><path d="M7 0.8v12.4M0.8 7h12.4" stroke="#1f1f1f" stroke-width="1.7"/></svg>
<svg class="a" style="left:1249.5px;top:688.5px" width="8" height="11" viewBox="0 0 8 11"><path d="M1.5 1l4.5 4.5L1.5 10" fill="none" stroke="#444746" stroke-width="1.7"/></svg>

<!--/SIDE-->

</body></html>
